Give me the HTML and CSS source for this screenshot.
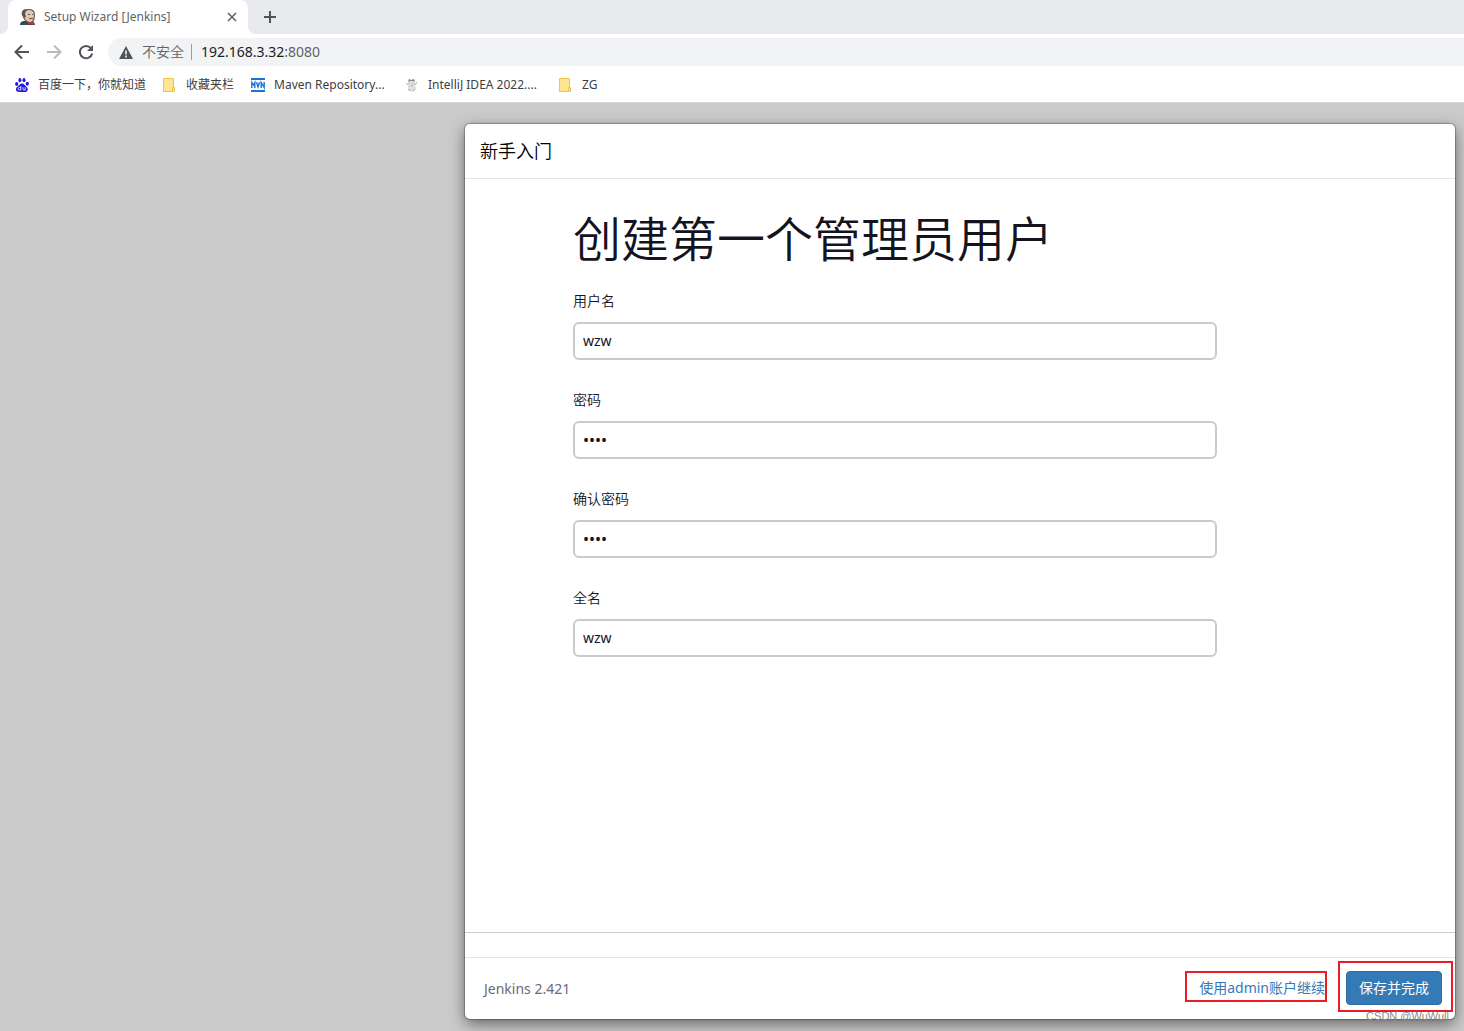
FILE: index.html
```html
<!DOCTYPE html>
<html lang="zh-CN">
<head>
<meta charset="utf-8">
<title>Setup Wizard [Jenkins]</title>
<link rel="stylesheet" href="styles.css">
</head>
<body>
<header class="browser">
  <div class="tabs">
    <div class="tab">
      <svg class="tab-icon" width="16" height="16" viewBox="0 0 16 16" aria-hidden="true">
        <path d="M0 16c0-3 2-4 4-4h7c2 0 4 2 4 4z" fill="#2f4a5c"/>
        <path d="M2 5c0-3 3-5 7-5 4 0 6 2 6 6 0 4-1 8-5 8-4 0-7-4-8-9z" fill="#6b5a50"/>
        <path d="M5 4c1-4 8-4 9 1 0 4-1 8-4 8S5 10 4 8z" fill="#e3c7ac"/>
        <path d="M2 6c-1-3 1-6 4-6L5 4l1 4-2 1z" fill="#5b5652"/>
        <path d="M8 5.500h2M12 5.500h1.500M9 9.500h4" stroke="#6a554b" fill="none"/>
        <path d="M8 12.500l3 1 3-1V16l-3-1-3 1z" fill="#c8322d"/>
      </svg>
      <span class="tab-title">Setup Wizard [Jenkins]</span>
      <button class="icon-button" aria-label="关闭标签页"><svg width="10" height="10" viewBox="0 0 10 10"><path d="M1 1l8 8M9 1L1 9" stroke="#5f6368" stroke-width="1.600"/></svg></button>
    </div>
    <button class="icon-button new-tab" aria-label="新标签页"><svg width="12" height="12" viewBox="0 0 12 12"><path d="M6 0v12M0 6h12" stroke="#50545a" stroke-width="2"/></svg></button>
  </div>
  <div class="toolbar">
    <button class="icon-button" aria-label="后退"><svg width="16" height="16" viewBox="0 0 16 16"><path d="M15 8H2M8 1.500L1.500 8 8 14.500" fill="none" stroke="#50545a" stroke-width="2"/></svg></button>
    <button class="icon-button" aria-label="前进"><svg width="16" height="16" viewBox="0 0 16 16"><path d="M1 8h13M8 1.500L14.500 8 8 14.500" fill="none" stroke="#b9bbbe" stroke-width="2"/></svg></button>
    <button class="icon-button" aria-label="刷新"><svg width="16" height="16" viewBox="0 0 16 16"><path d="M13 4.200A6.200 6.200 0 1 0 14.200 9.500" fill="none" stroke="#50545a" stroke-width="2"/><path d="M15 1v6H9z" fill="#50545a"/></svg></button>
    <div class="address">
      <svg width="14" height="13" viewBox="0 0 14 13" aria-hidden="true"><path d="M7 0l7 13H0z" fill="#50545a"/><path d="M7 4.500v4M7 9.500v2" stroke="#f1f3f4" stroke-width="1.600"/></svg>
      <span class="insecure">不安全</span>
      <span class="url">192.168.3.32<span class="port">:8080</span></span>
    </div>
  </div>
  <nav class="bookmarks">
    <a href="#"><svg width="14" height="14" viewBox="0 0 14 14" aria-hidden="true"><g fill="#2319dc"><ellipse cx="1.700" cy="6" rx="1.600" ry="2"/><ellipse cx="4.900" cy="2.200" rx="1.500" ry="2.100"/><ellipse cx="9" cy="2.200" rx="1.500" ry="2.100"/><ellipse cx="12.300" cy="5.800" rx="1.600" ry="2"/><path d="M7 5.500c2 0 3 2 4.500 3.200C14 11 12.500 14 10 14H4c-3 0-4-3-2-5 2-1.300 3-3.500 5-3.500z"/></g><path d="M5.800 8v4H4.400a1.200 1.200 0 0 1 0-2.500h1.400M8 9.200v2q0 .8.800.8h1.400V9.200" fill="none" stroke="#fff" stroke-width=".8"/></svg><span>百度一下，你就知道</span></a>
    <a href="#"><svg width="14" height="14" viewBox="0 0 14 14" aria-hidden="true"><path d="M.5.500h10v13h-10z" fill="#ffe592" stroke="#e9c650"/><path d="M9.500 9.500h2v4h-2z" fill="#ffe592" stroke="#e9c650"/></svg><span>收藏夹栏</span></a>
    <a class="long" href="#"><svg width="14" height="14" viewBox="0 0 14 14" aria-hidden="true"><path d="M0 0h14v2H0zM0 12h14v2H0z" fill="#1976d2"/><path d="M.8 10V4.500L2.300 7 3.800 4.500V10M5.500 4.200L7 9l1.500-4.800M10.200 10V4.500l3 5V4" fill="none" stroke="#1976d2" stroke-width="1.400"/></svg><span>Maven Repository...</span></a>
    <a class="long" href="#"><svg width="14" height="14" viewBox="0 0 14 14" aria-hidden="true"><path d="M3 3l1-2 2 1 3-1 1 2 0 3 1 5-3 3-4-1-1-4 0-3z" fill="#dedede"/><path d="M3 4l1-3 2 1 3-1 1 3-2-1H5z" fill="#8a8a8a"/><path d="M1 5l2 2M12 4l-2 3M4 5.500h1M8 5.500h1M3 11l2 2M8 13l2-2" stroke="#aaa"/><path d="M6 7.500h1.500" stroke="#b88"/></svg><span>IntelliJ IDEA 2022....</span></a>
    <a href="#"><svg width="14" height="14" viewBox="0 0 14 14" aria-hidden="true"><path d="M.5.500h10v13h-10z" fill="#ffe592" stroke="#e9c650"/><path d="M9.500 9.500h2v4h-2z" fill="#ffe592" stroke="#e9c650"/></svg><span>ZG</span></a>
  </nav>
</header>
<main class="page">
  <form class="modal">
    <div class="modal-header">新手入门</div>
    <div class="modal-body">
      <h1>创建第一个管理员用户</h1>
      <div class="field"><label for="username">用户名</label><input id="username" type="text" value="wzw"></div>
      <div class="field"><label for="password">密码</label><input id="password" type="password" value="1234"></div>
      <div class="field"><label for="confirm">确认密码</label><input id="confirm" type="password" value="1234"></div>
      <div class="field"><label for="fullname">全名</label><input id="fullname" type="text" value="wzw"></div>
    </div>
    <div class="modal-footer">
      <span class="version">Jenkins 2.421</span>
      <div class="mark mark-link"><a href="#">使用admin账户继续</a></div>
      <div class="mark mark-save"><button class="save" type="button">保存并完成</button></div>
    </div>
    <span class="watermark">CSDN @WuWull</span>
  </form>
</main>
</body>
</html>
```
FILE: styles.css
```css
* { box-sizing: border-box; }

body {
  margin: 0;
  min-height: 100vh;
  display: flex;
  flex-direction: column;
  background: #cbcbcb;
  color: #14141f;
  font-family: "Noto Sans", "Noto Sans CJK SC", sans-serif;
  font-size: 14px;
  line-height: 20px;
}

svg { display: block; flex: none; }
a { text-decoration: none; }
button, input { font: inherit; color: inherit; }

.browser { background: #fff; border-bottom: 1px solid #d9d9d9; }

.tabs {
  display: flex;
  height: 34px;
  padding-left: 8px;
  background: #e8eaed;
}

.tab {
  position: relative;
  display: flex;
  align-items: center;
  width: 240px;
  padding: 0 8px 0 12px;
  background: #fff;
  border-radius: 8px 8px 0 0;
  color: #5f6368;
  font-size: 12px;
}

.tab::before, .tab::after {
  content: "";
  position: absolute;
  bottom: 0;
  width: 8px;
  height: 8px;
}
.tab::before { right: 100%; background: radial-gradient(circle at 0 0, transparent 8px, #fff 8px); }
.tab::after { left: 100%; background: radial-gradient(circle at 100% 0, transparent 8px, #fff 8px); }

.tab-title { flex: 1; margin-left: 8px; }

.icon-button {
  display: flex;
  align-items: center;
  justify-content: center;
  width: 16px;
  height: 16px;
  padding: 0;
  border: 0;
  background: none;
}
.new-tab { align-self: center; margin-left: 14px; }

.toolbar {
  display: flex;
  align-items: center;
  gap: 16px;
  height: 36px;
  padding-left: 14px;
}

.address {
  flex: 1;
  display: flex;
  align-items: center;
  gap: 9px;
  height: 28px;
  margin-left: -2px;
  padding-left: 11px;
  background: #f1f3f4;
  border-radius: 14px 0 0 14px;
}
.insecure {
  padding-right: 7px;
  border-right: 1px solid #9a9da1;
  color: #5f6368;
  font-weight: 350;
  line-height: 16px;
}
.url { color: #202124; }
.port { color: #5f6368; }

.bookmarks {
  display: flex;
  align-items: center;
  gap: 17px;
  height: 32px;
  padding: 0 15px 2px;
  font-size: 12px;
}
.bookmarks a {
  display: flex;
  align-items: center;
  gap: 9px;
  color: #3c4043;
}
.bookmarks .long { min-width: 137px; }

.page { flex: 1; display: flex; justify-content: flex-end; padding: 21px 9px 12px; }

.modal {
  position: relative;
  display: flex;
  flex-direction: column;
  width: 100%;
  max-width: 990px;
  background: #fff;
  border-radius: 5px;
  box-shadow: 0 0 1px 1px rgba(0, 0, 0, .25), 0 5px 15px rgba(0, 0, 0, .5);
}

.modal-header {
  padding: 14px 15px;
  border-bottom: 1px solid #e5e5e5;
  font-size: 18px;
  font-weight: 350;
  line-height: 26px;
  color: #000;
}

.modal-body {
  flex: 1;
  margin-bottom: 24px;
  padding: 32px 24% 24px 108px;
  border-bottom: 1px solid #ccc;
}

h1 {
  margin: 0 0 24px;
  font-size: 48px;
  font-weight: 350;
  line-height: 56px;
}

.field { display: flex; flex-direction: column; gap: 11px; margin-bottom: 30px; }
.field label { font-weight: 350; }

.field input {
  width: 100%;
  height: 38px;
  padding: 0 8px 2px;
  border: 2px solid #c3cdd1;
  border-radius: 6px;
  background: #fff;
  outline: 0;
}
.field input[type="password"] { padding-bottom: 0; font-size: 16px; }

.modal-footer {
  display: flex;
  align-items: center;
  min-height: 62px;
  padding: 0 2px 4px 19px;
  border-top: 1px solid #e5e5e5;
}
.version { flex: 1; padding-top: 4px; color: #6b6b73; }
.mark { border: 2px solid #ed1c24; }
.mark-link { margin-right: 11px; padding: 5px 0 2px 12px; }
.mark-link a { color: #337ab7; }
.mark-save { padding: 8px 9px 5px 6px; }

.save {
  display: block;
  height: 34px;
  padding: 0 12px;
  border: 1px solid #2e6da4;
  border-radius: 4px;
  background: #337ab7;
  color: #fff;
}

.watermark {
  position: absolute;
  right: 6px;
  bottom: -4px;
  color: #8b8b8b;
  font: 11px/14px "Liberation Sans", Arial, sans-serif;
}
```
